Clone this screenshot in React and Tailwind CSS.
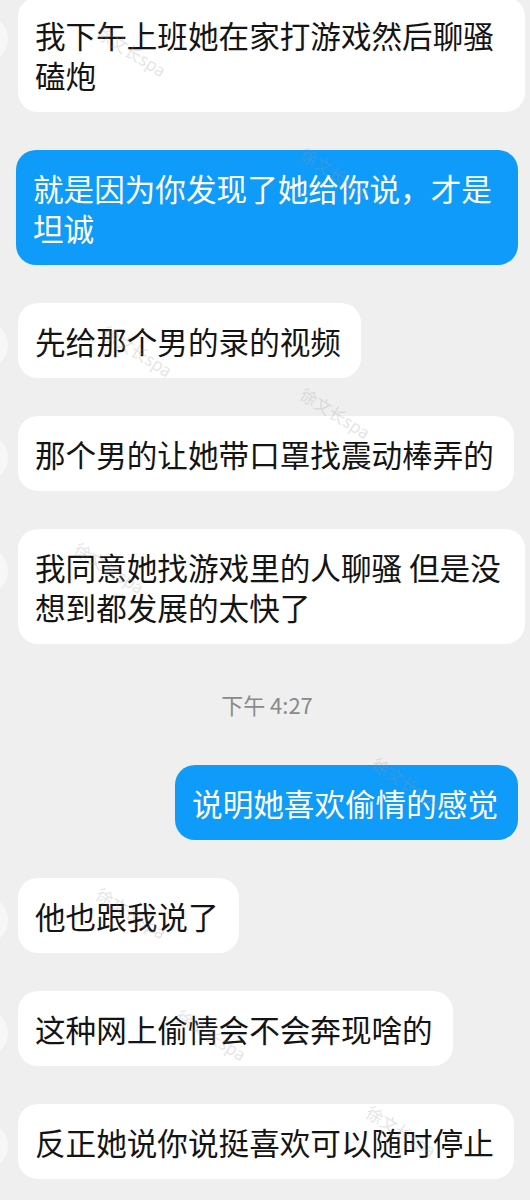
import React from 'react';

const messages = [
  { side: 'left', text: '我下午上班她在家打游戏然后聊骚磕炮' },
  { side: 'right', text: '就是因为你发现了她给你说，才是坦诚' },
  { side: 'left', text: '先给那个男的录的视频' },
  { side: 'left', text: '那个男的让她带口罩找震动棒弄的' },
  { side: 'left', text: '我同意她找游戏里的人聊骚 但是没想到都发展的太快了' },
  { side: 'time', text: '下午 4:27' },
  { side: 'right', text: '说明她喜欢偷情的感觉' },
  { side: 'left', text: '他也跟我说了' },
  { side: 'left', text: '这种网上偷情会不会奔现啥的' },
  { side: 'left', text: '反正她说你说挺喜欢可以随时停止' },
];

// faint watermark stamps scattered over the screenshot
const marks = [
  { top: 38, left: 92 },
  { top: 160, left: 296 },
  { top: 338, left: 98 },
  { top: 400, left: 296 },
  { top: 555, left: 70 },
  { top: 770, left: 368 },
  { top: 900, left: 92 },
  { top: 1022, left: 172 },
  { top: 1118, left: 362 },
];

const Bubble = ({ side, text }) => {
  if (side === 'time') {
    return (
      <div className="h-[45px] flex items-center justify-center pl-[4px] text-[22px] text-[#8a8a8a]">
        {text}
      </div>
    );
  }

  if (side === 'right') {
    return (
      <div className="flex justify-end pr-[12px]">
        <div className="max-w-[502px] rounded-[20px] bg-[#0f9bf9] text-white pl-[17px] pr-[20px] pt-[18px] pb-[17px] leading-[40px] text-[30.6px]">
          {text}
        </div>
      </div>
    );
  }

  return (
    <div className="relative flex pl-[18px]">
      <div className="absolute left-[-40px] top-[18px] w-[48px] h-[48px] rounded-full bg-[#f7f7f7]" />
      <div className="max-w-[507px] rounded-[20px] bg-white text-[#141414] pl-[17px] pr-[20px] pt-[18px] pb-[17px] leading-[40px] text-[30.6px]">
        {text}
      </div>
    </div>
  );
};

export default function App() {
  return (
    <div
      className="relative w-[530px] h-[1200px] overflow-hidden bg-[#efefef]"
      style={{ fontFamily: '"Noto Sans CJK SC", "Noto Sans", sans-serif' }}
    >
      <div className="flex flex-col gap-[38px] mt-[-3px]">
        {messages.map((m, i) => (
          <Bubble key={i} side={m.side} text={m.text} />
        ))}
      </div>

      {marks.map((m, i) => (
        <div
          key={i}
          className="absolute rotate-[32deg] text-[17px] text-[#9a9a9a] opacity-25 pointer-events-none whitespace-nowrap"
          style={{ top: m.top, left: m.left }}
        >
          徐文长spa
        </div>
      ))}
    </div>
  );
}
